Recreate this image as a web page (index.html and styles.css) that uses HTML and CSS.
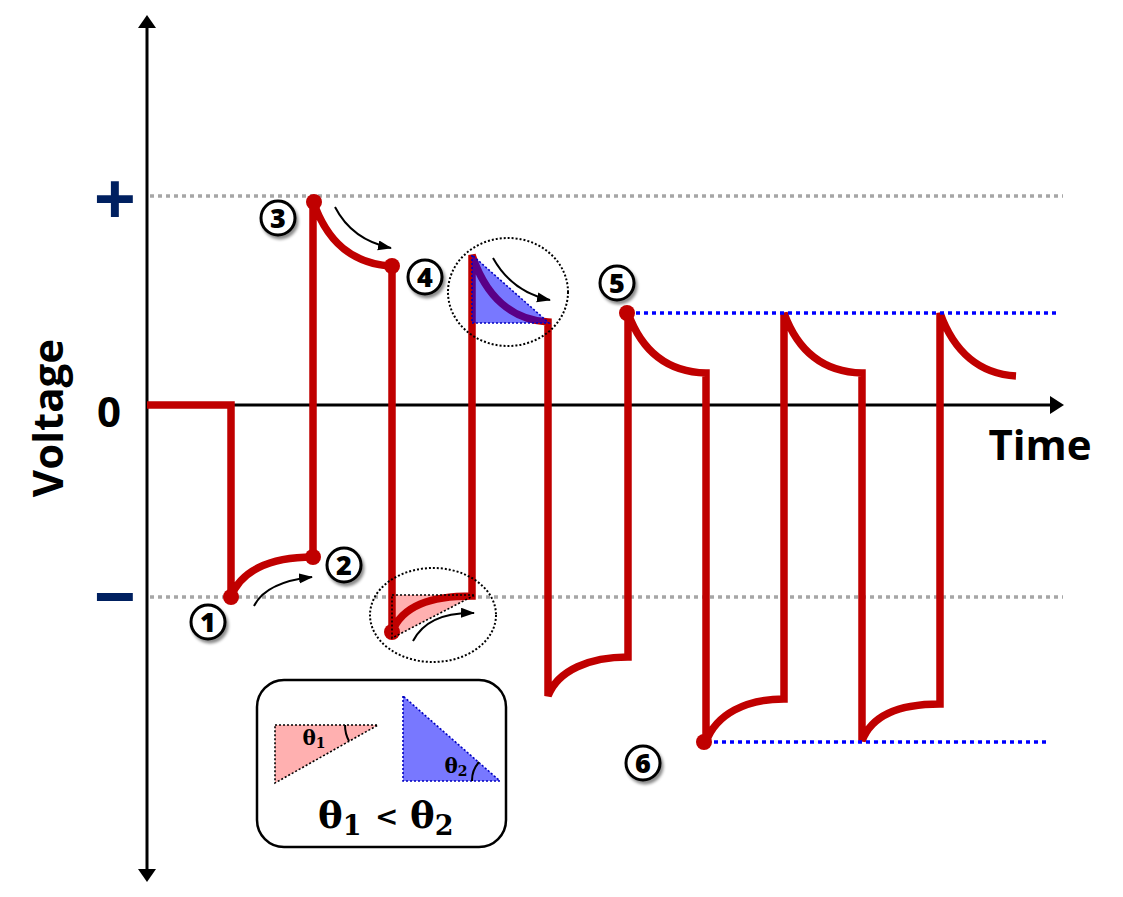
FILE: index.html
```html
<!DOCTYPE html>
<html lang="en">
<head>
<meta charset="utf-8">
<title>Voltage vs Time</title>
<link rel="stylesheet" href="styles.css">
</head>
<body>
<div class="figure">
<svg class="chart" width="1123" height="897" viewBox="0 0 1123 897" xmlns="http://www.w3.org/2000/svg">
  <defs>
    <marker id="tip" markerUnits="userSpaceOnUse" markerWidth="14" markerHeight="12" refX="13" refY="5" orient="auto">
      <path d="M0,0 L14,5 L0,10 z" class="tip-fill"/>
    </marker>
    <filter id="shadow" x="-40%" y="-40%" width="190%" height="190%">
      <feDropShadow dx="2" dy="3" stdDeviation="1.6" flood-color="#000" flood-opacity="0.45"/>
    </filter>
  </defs>

  <!-- reference levels -->
  <line class="gray-dots" x1="150" y1="196" x2="1063" y2="196"/>
  <line class="gray-dots" x1="150" y1="597" x2="1063" y2="597"/>

  <!-- axes -->
  <line class="axis" x1="147" y1="26" x2="147" y2="870"/>
  <polygon class="axis-head" points="147,15 138,28 156,28"/>
  <polygon class="axis-head" points="147,882 138,869 156,869"/>
  <line class="axis" x1="147" y1="405" x2="1052" y2="405"/>
  <polygon class="axis-head" points="1064,405 1050,396 1050,414"/>

  <!-- pink triangle under curve -->
  <polygon class="pink-fill" points="392,595 475,595 392,638"/>

  <!-- waveform -->
  <path class="wave" d="M147,405 H231 V597 C240,572 268,557 313,557 V201 C327,242 352,264 392,266 V632 C402,606 430,596 472,596 V255 C486,297 512,320 548,322 V696 C558,670 590,657 628,657 V313 C642,352 668,372 706,373 V742 C716,714 746,699 784,699 V313 C798,352 824,372 862,373 V741 C872,714 902,704 940,704 V313 C954,352 980,374 1016,376"/>

  <!-- blue dotted levels -->
  <line class="blue-dots" x1="636" y1="313" x2="1058" y2="313"/>
  <line class="blue-dots" x1="714" y1="742" x2="1048" y2="742"/>

  <!-- dots -->
  <circle class="wave-dot" cx="231" cy="597" r="8"/>
  <circle class="wave-dot" cx="313" cy="557" r="8"/>
  <circle class="wave-dot" cx="314" cy="202" r="8"/>
  <circle class="wave-dot" cx="392" cy="266" r="8"/>
  <circle class="wave-dot" cx="392" cy="632" r="8"/>
  <circle class="wave-dot" cx="627" cy="313" r="8"/>
  <circle class="wave-dot" cx="704" cy="742" r="8"/>

  <!-- pink triangle border -->
  <polygon class="black-dots-thin" points="392,595 475,595 392,638"/>

  <!-- blue triangle over curve -->
  <polygon class="blue-fill" points="472,255 472,323 549,323"/>
  <polygon class="blue-border" points="472,255 472,323 549,323"/>

  <!-- dotted ellipses -->
  <ellipse class="black-dots" cx="508" cy="292" rx="60" ry="54"/>
  <ellipse class="black-dots" cx="433" cy="615" rx="63" ry="47"/>

  <!-- small arrows -->
  <path class="small-arrow" d="M254,606 Q266,582 312,577" marker-end="url(#tip)"/>
  <path class="small-arrow" d="M335,207 Q352,240 391,248" marker-end="url(#tip)"/>
  <path class="small-arrow" d="M493,258 Q512,292 550,300" marker-end="url(#tip)"/>
  <path class="small-arrow" d="M413,641 Q428,612 474,613" marker-end="url(#tip)"/>

  <!-- numbered markers -->
  <g class="badge">
    <circle cx="208" cy="622" r="17"/>
    <text x="208" y="632">1</text>
  </g>
  <g class="badge">
    <circle cx="344" cy="565" r="17"/>
    <text x="344" y="575">2</text>
  </g>
  <g class="badge">
    <circle cx="278" cy="218" r="17"/>
    <text x="278" y="228">3</text>
  </g>
  <g class="badge">
    <circle cx="425" cy="277" r="17"/>
    <text x="425" y="287">4</text>
  </g>
  <g class="badge">
    <circle cx="617" cy="283" r="17"/>
    <text x="617" y="293">5</text>
  </g>
  <g class="badge">
    <circle cx="643" cy="763" r="17"/>
    <text x="643" y="773">6</text>
  </g>

  <!-- axis labels -->
  <text class="sign" x="115" y="225">+</text>
  <text class="sign" x="115" y="623">−</text>
  <text class="zero" x="109" y="427">0</text>
  <text class="axis-title" transform="translate(63 418) rotate(-90)">Voltage</text>
  <text class="axis-title" x="1040" y="460">Time</text>

  <!-- legend -->
  <rect class="legend-box" x="257" y="680" width="249" height="167" rx="27" ry="27"/>
  <polygon class="pink-fill" points="275,725 378,725 275,783"/>
  <polygon class="black-dots-thin" points="275,725 378,725 275,783"/>
  <path class="angle-arc" d="M345,725 A33,33 0 0 0 349,741"/>
  <text class="theta-small" x="314" y="745">θ<tspan class="sub" dy="3">1</tspan></text>

  <polygon class="legend-blue" points="403,696 403,781 500,781"/>
  <polygon class="blue-border" points="403,696 403,781 500,781"/>
  <path class="angle-arc" d="M472,781 A28,28 0 0 1 479,762"/>
  <text class="theta-small" x="456" y="773">θ<tspan class="sub" dy="3">2</tspan></text>

  <text class="theta-big" x="318" y="828">θ<tspan class="sub-big" dy="7">1</tspan></text>
  <text class="theta-big lt" x="375" y="826">&lt;</text>
  <text class="theta-big" x="410" y="828">θ<tspan class="sub-big" dy="7">2</tspan></text>
</svg>
</div>
</body>
</html>
```

FILE: styles.css
```css
html, body {
  margin: 0;
  padding: 0;
  background: #ffffff;
}

.figure {
  width: 1123px;
  height: 897px;
  overflow: hidden;
}

.chart {
  display: block;
}

.gray-dots {
  stroke: #a6a6a6;
  stroke-width: 3.5;
  stroke-dasharray: 4 4;
  fill: none;
}

.blue-dots {
  stroke: #0000ff;
  stroke-width: 3.5;
  stroke-dasharray: 4 4;
  fill: none;
}

.axis {
  stroke: #000000;
  stroke-width: 3;
  fill: none;
}

.axis-head,
.tip-fill {
  fill: #000000;
}

.wave {
  fill: none;
  stroke: #c00000;
  stroke-width: 7.5;
  stroke-linejoin: miter;
  stroke-linecap: butt;
}

.wave-dot {
  fill: #c00000;
}

.pink-fill {
  fill: #ffb0b0;
}

.blue-fill {
  fill: #0000ff;
  fill-opacity: 0.53;
}

.legend-blue {
  fill: #7878ff;
}

.blue-border {
  fill: none;
  stroke: #0000c0;
  stroke-width: 1.6;
  stroke-dasharray: 2 2;
}

.black-dots {
  fill: none;
  stroke: #000000;
  stroke-width: 2;
  stroke-dasharray: 2 2;
}

.black-dots-thin {
  fill: none;
  stroke: #000000;
  stroke-width: 1.6;
  stroke-dasharray: 2 2;
}

.small-arrow {
  fill: none;
  stroke: #000000;
  stroke-width: 2;
}

.badge circle {
  fill: #ffffff;
  stroke: #000000;
  stroke-width: 3;
  filter: url(#shadow);
}

.badge text {
  font-family: "Open Sans", "DejaVu Sans", sans-serif;
  font-weight: 800;
  font-size: 27px;
  text-anchor: middle;
  fill: #000000;
}

.sign {
  font-family: "Open Sans", "DejaVu Sans", sans-serif;
  font-weight: 700;
  font-size: 74px;
  text-anchor: middle;
  fill: #002060;
}

.zero {
  font-family: "Open Sans", "DejaVu Sans", sans-serif;
  font-weight: 700;
  font-size: 42px;
  text-anchor: middle;
  fill: #000000;
}

.axis-title {
  font-family: "Open Sans", "DejaVu Sans", sans-serif;
  font-weight: 700;
  font-size: 42px;
  text-anchor: middle;
  fill: #000000;
}

.legend-box {
  fill: #ffffff;
  stroke: #000000;
  stroke-width: 2.5;
}

.angle-arc {
  fill: none;
  stroke: #000000;
  stroke-width: 2;
}

.theta-small {
  font-family: "DejaVu Serif", "Liberation Serif", serif;
  font-weight: 700;
  font-size: 20px;
  text-anchor: middle;
  fill: #000000;
}

.theta-small .sub {
  font-size: 14px;
}

.theta-big {
  font-family: "DejaVu Serif", "Liberation Serif", serif;
  font-weight: 700;
  font-size: 37px;
  fill: #000000;
}

.theta-big .sub-big {
  font-size: 27px;
}

.theta-big.lt {
  font-size: 28px;
}
```
